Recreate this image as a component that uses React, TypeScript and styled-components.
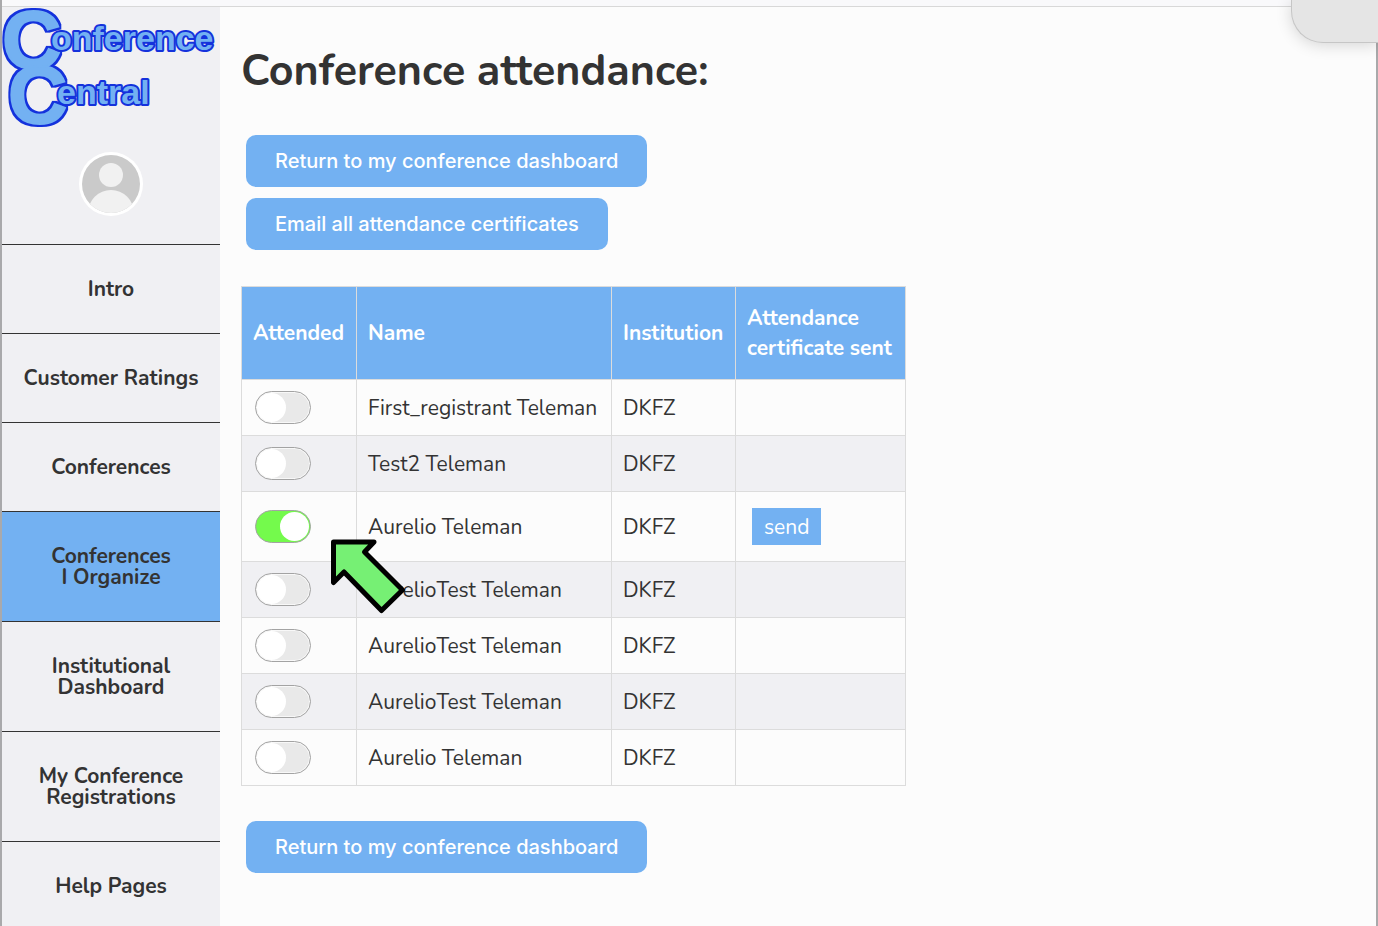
import React, { useState } from "react";
import styled, { createGlobalStyle } from "styled-components";

const BLUE = "#73b1f2";
const INK = "#333333";
const PANEL = "#f0f0f3";
const LINE = "#dcdcdc";
const OUTLINE = "#1432dc";

const GlobalStyle = createGlobalStyle`
  *, *::before, *::after { box-sizing: border-box; }
  body {
    margin: 0;
    background: #fcfcfc;
    color: ${INK};
    font-family: Nunito, Lato, "Open Sans", sans-serif;
    font-size: 21px;
  }
`;

const Frame = styled.div`
  display: flex;
  flex-direction: column;
  height: 100vh;
  overflow: hidden;
  border: solid #a9a9ab;
  border-width: 0 2px;
`;

const TopStrip = styled.div`
  flex: none;
  height: 7px;
  background: #f9f9fb;
  border-bottom: 1px solid #d8d8d8;
`;

const CornerPanel = styled.div`
  position: absolute;
  top: 0;
  right: 0;
  width: 87px;
  height: 43px;
  background: #e5e5e5;
  border: solid #c6c6c6;
  border-width: 0 0 1px 1px;
  border-bottom-left-radius: 32px;
  box-shadow: 0 2px 16px rgba(0, 0, 0, 0.16);
`;

const Body = styled.div`
  display: flex;
  flex: 1;
  min-height: 0;
`;

const Sidebar = styled.aside`
  flex: 0 0 218px;
  overflow-y: auto;
  scrollbar-width: none;
  background: ${PANEL};
`;

const LogoArt = styled.svg`
  display: block;
  width: 218px;
  height: 123px;
  overflow: visible;
  font-family: "Liberation Sans", Arial, sans-serif;
  font-weight: 700;
`;

const AvatarArt = styled.svg`
  display: block;
  width: 64px;
  height: 64px;
  margin: 22px auto 28px;
`;

const NavLink = styled.a<{ $active?: boolean }>`
  display: block;
  padding: 34px 16px 33px;
  border-top: 1px solid ${INK};
  background: ${(p) => (p.$active ? BLUE : "transparent")};
  color: ${INK};
  font-weight: 700;
  line-height: 21px;
  text-align: center;
  text-decoration: none;
  white-space: pre-line;
`;

const Main = styled.main`
  flex: 1;
  min-width: 0;
  overflow: auto;
  padding: 34px 21px;
`;

const Title = styled.h1`
  margin: 0 0 34px;
  font-size: 43px;
  font-weight: 700;
  line-height: 60px;
`;

const Actions = styled.div`
  display: flex;
  flex-direction: column;
  align-items: flex-start;
  gap: 11px;
  margin-left: 5px;
`;

const ActionButton = styled.button`
  height: 52px;
  padding: 0 29px;
  border: 0;
  border-radius: 10px;
  background: ${BLUE};
  color: #fff;
  font-family: Inter, sans-serif;
  font-size: 20px;
  font-weight: 500;
  cursor: pointer;
`;

const TableWrap = styled.div`
  position: relative;
  margin: 36px 0 35px;
`;

const Table = styled.table`
  width: 665px;
  table-layout: fixed;
  border-collapse: collapse;

  th, td {
    padding: 11px;
    border: 1px solid ${LINE};
    line-height: 30px;
    text-align: left;
    vertical-align: middle;
    white-space: nowrap;
  }
  th {
    padding: 16px 11px;
    background: ${BLUE};
    color: #fff;
    font-weight: 700;
    white-space: pre;
  }
  tbody tr:nth-child(even) { background: ${PANEL}; }
`;

const Col = styled.col<{ $w: number }>`
  width: ${(p) => p.$w}px;
`;

const Switch = styled.input`
  appearance: none;
  display: block;
  width: 56px;
  height: 33px;
  margin: 0 2px;
  padding: 1px;
  border: 1px solid #a3a3a3;
  border-radius: 17px;
  background: #e9e9e9;
  box-shadow: inset 0 0 0 1px #f8f8f8;
  cursor: pointer;

  &::before {
    content: "";
    display: block;
    width: 29px;
    height: 29px;
    border-radius: 50%;
    background: #fff;
  }
  &:checked {
    background: #74fa4c;
    box-shadow: none;
  }
  &:checked::before { margin-left: auto; }
`;

const SendButton = styled.button`
  display: block;
  height: 37px;
  margin: 5px;
  padding: 0 12px;
  border: 0;
  background: ${BLUE};
  color: #fff;
  font: inherit;
  cursor: pointer;
`;

const Pointer = styled.svg`
  position: absolute;
  left: 88px;
  top: 252px;
  width: 80px;
  height: 80px;
  pointer-events: none;
`;

function Logo() {
  return (
    <LogoArt viewBox="0 0 218 123" role="img" aria-label="Conference Central">
      {/* One outline runs round both initials where they merge. */}
      <filter id="outline" x="-20%" y="-20%" width="140%" height="140%" colorInterpolationFilters="sRGB">
        <feMorphology in="SourceAlpha" operator="dilate" radius="2" result="grown" />
        <feFlood floodColor={OUTLINE} />
        <feComposite in2="grown" operator="in" />
        <feMerge>
          <feMergeNode />
          <feMergeNode in="SourceGraphic" />
        </feMerge>
      </filter>
      <g filter="url(#outline)" fill={BLUE} stroke={BLUE} strokeWidth="2" fontSize="82">
        <text x="0" y="61">C</text>
        <text x="6" y="116">C</text>
      </g>
      <g fill={BLUE} stroke={OUTLINE} strokeWidth="4" strokeLinejoin="round" paintOrder="stroke" fontSize="34">
        <text x="49" y="43">onference</text>
        <text x="55" y="97">entral</text>
      </g>
    </LogoArt>
  );
}

function Avatar() {
  return (
    <AvatarArt viewBox="0 0 64 64" aria-hidden="true">
      <clipPath id="face"><circle cx="32" cy="32" r="29" /></clipPath>
      <circle cx="32" cy="32" r="32" fill="#fff" />
      <g clipPath="url(#face)">
        <rect width="64" height="64" fill="#cacaca" />
        <circle cx="32" cy="23" r="12" fill="#f1f1f1" />
        <circle cx="32" cy="61" r="23" fill="#f1f1f1" />
      </g>
    </AvatarArt>
  );
}

const NAV = [
  "Intro",
  "Customer Ratings",
  "Conferences",
  "Conferences\nI Organize",
  "Institutional\nDashboard",
  "My Conference\nRegistrations",
  "Help Pages",
];

const PEOPLE = [
  "First_registrant Teleman",
  "Test2 Teleman",
  "Aurelio Teleman",
  "AurelioTest Teleman",
  "AurelioTest Teleman",
  "AurelioTest Teleman",
  "Aurelio Teleman",
];

export default function App() {
  const [attended, setAttended] = useState(PEOPLE.map((_, i) => i === 2));
  const toggle = (row: number) =>
    setAttended((list) => list.map((on, i) => (i === row ? !on : on)));

  return (
    <>
      <GlobalStyle />
      <Frame>
        <TopStrip />
        <Body>
          <Sidebar>
            <Logo />
            <Avatar />
            <nav>
              {NAV.map((label, i) => (
                <NavLink key={label} href="#" $active={i === 3}>{label}</NavLink>
              ))}
            </nav>
          </Sidebar>
          <Main>
            <Title>Conference attendance:</Title>
            <Actions>
              <ActionButton>Return to my conference dashboard</ActionButton>
              <ActionButton>Email all attendance certificates</ActionButton>
            </Actions>
            <TableWrap>
              <Table>
                <colgroup>
                  <Col $w={115} />
                  <Col $w={255} />
                  <Col $w={124} />
                  <Col $w={170} />
                </colgroup>
                <thead>
                  <tr>
                    <th>Attended</th>
                    <th>Name</th>
                    <th>Institution</th>
                    <th>{"Attendance\ncertificate sent"}</th>
                  </tr>
                </thead>
                <tbody>
                  {PEOPLE.map((name, i) => (
                    <tr key={i}>
                      <td>
                        <Switch
                          type="checkbox"
                          aria-label={`${name} attended`}
                          checked={attended[i]}
                          onChange={() => toggle(i)}
                        />
                      </td>
                      <td>{name}</td>
                      <td>DKFZ</td>
                      <td>{attended[i] && <SendButton>send</SendButton>}</td>
                    </tr>
                  ))}
                </tbody>
              </Table>
              <Pointer viewBox="0 0 80 80" aria-hidden="true">
                <path
                  d="M4.5 4 H45 L35.5 14 L73.5 52 L52.5 72.5 L15 34 L4.5 44.5 Z"
                  fill="#76f074"
                  stroke="#000"
                  strokeWidth="5"
                  strokeLinejoin="round"
                />
              </Pointer>
            </TableWrap>
            <Actions>
              <ActionButton>Return to my conference dashboard</ActionButton>
            </Actions>
          </Main>
        </Body>
      </Frame>
      <CornerPanel />
    </>
  );
}
